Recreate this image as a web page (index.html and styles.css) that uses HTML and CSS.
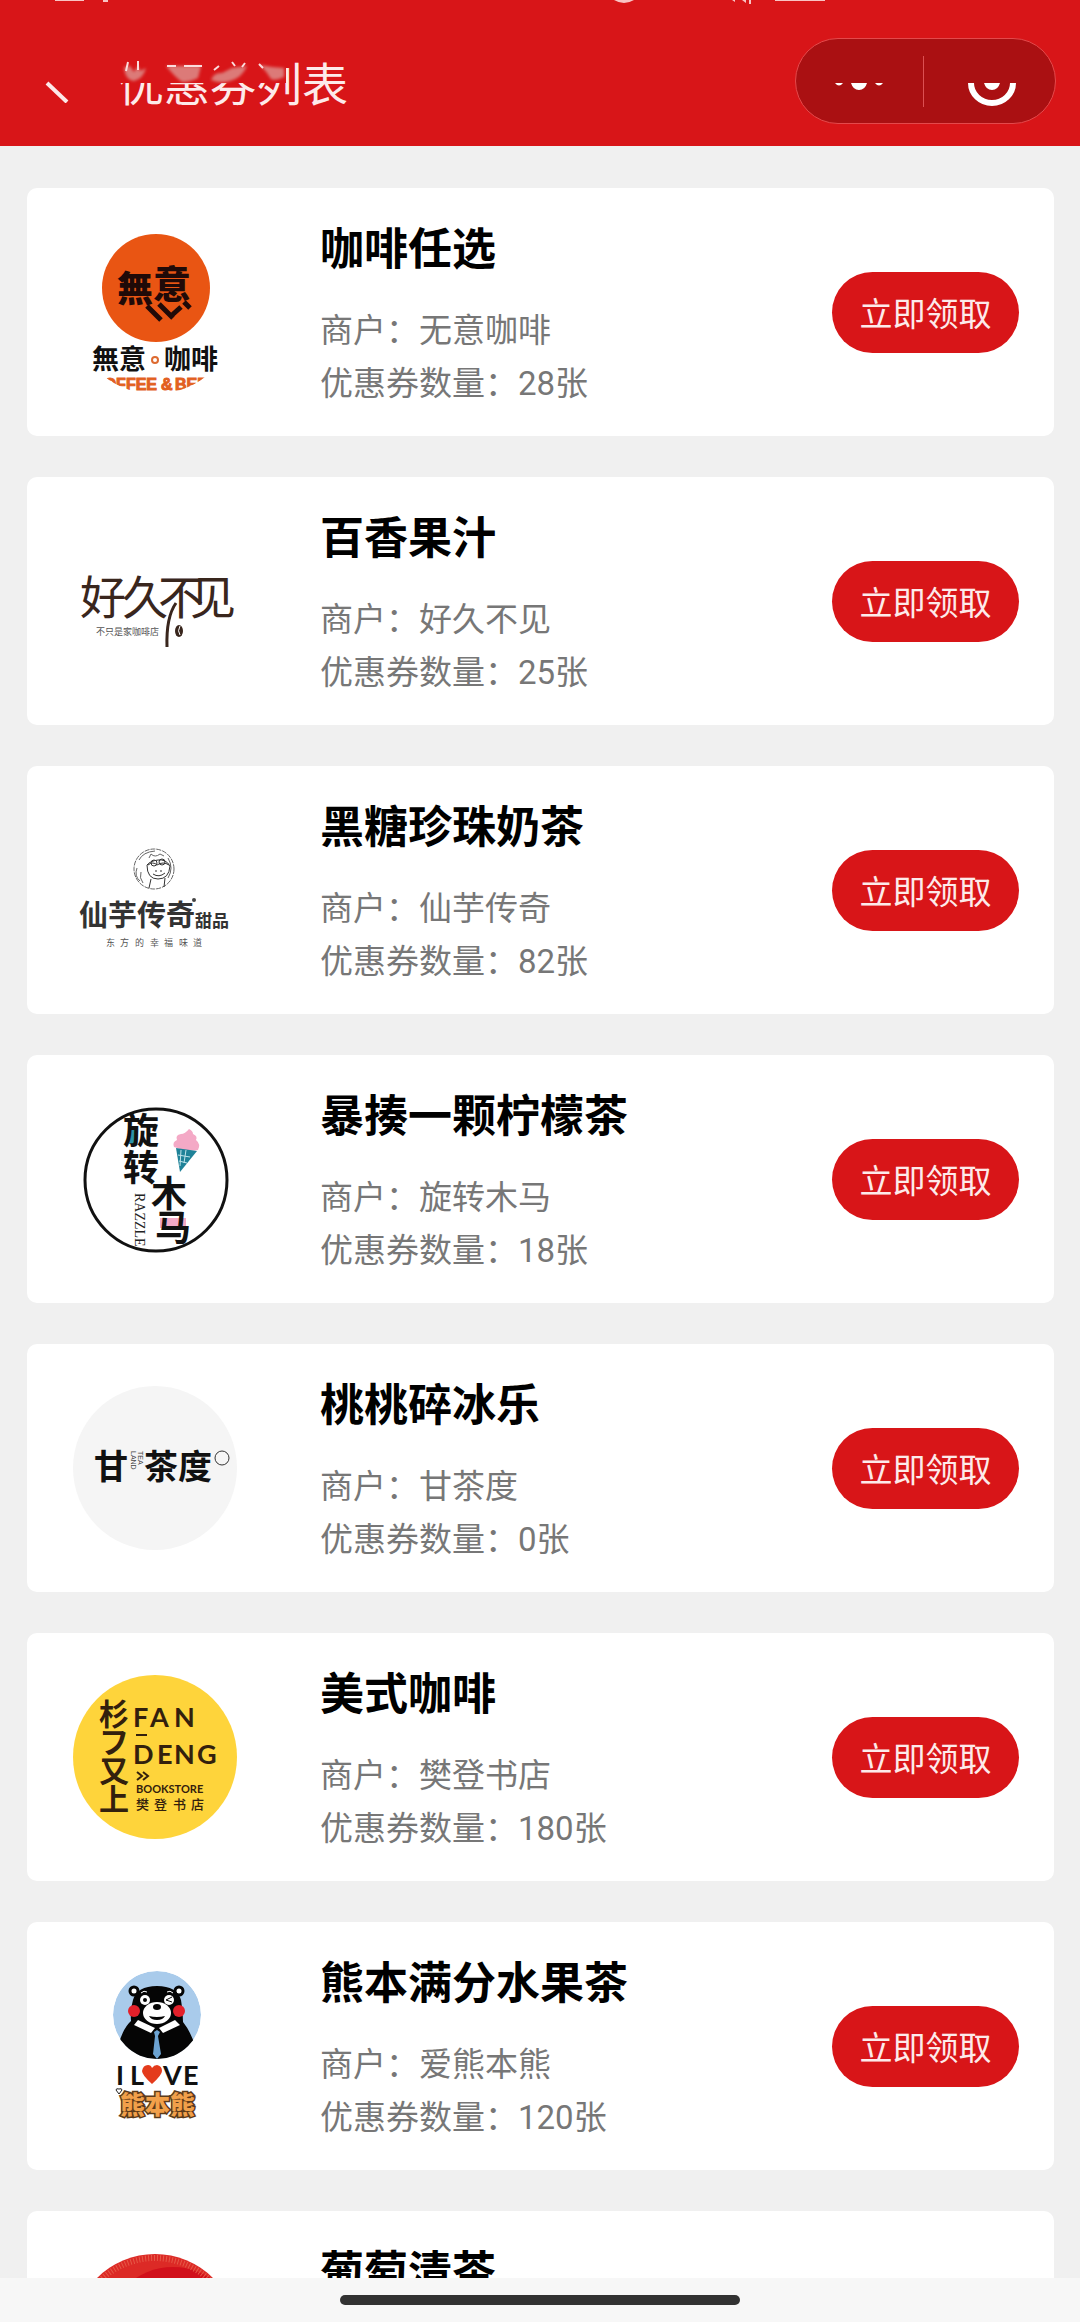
FILE: index.html
```
<!DOCTYPE html>
<html lang="zh-CN">
<head>
    <meta charset="UTF-8">
    <meta name="viewport" content="width=device-width, initial-scale=1.0">
    <title>优惠券列表</title>
    <link rel="stylesheet" href="styles.css">
</head>
<body>
    <header class="navbar">
        <svg class="status-left" width="60" height="4" viewBox="0 0 60 4" aria-hidden="true">
            <path d="M0 0h29v1H0zM48 0h5v2h-5z" fill="#f9c3c3"/>
        </svg>
        <svg class="status-right" width="214" height="4" viewBox="0 0 214 4" aria-hidden="true">
            <path d="M0 0h20q-10 6-20 0zM118 0h3v2zM128 0h4v3zM135 0h2v4h-2zM161 0h50v1h-50z" fill="#f9c3c3"/>
        </svg>
        <a class="back" href="#" aria-label="返回">
            <svg width="30" height="44" viewBox="0 0 30 44"><path d="M5 24L25 43" stroke="#fde8e8" stroke-width="4" fill="none"/></svg>
        </a>
        <div class="title-wrap">
            <h1>优惠券列表</h1>
            <svg class="title-mask" width="168" height="26" viewBox="0 0 168 26" aria-hidden="true">
                <defs>
                    <filter id="soft" x="-20%" y="-20%" width="140%" height="140%"><feGaussianBlur stdDeviation="1.5"/></filter>
                </defs>
                <rect width="168" height="25" fill="#d81518"/>
                <g fill="#dc7a78" filter="url(#soft)">
                    <path d="M6 9q1 13 10 14q9-2 12-13l-6 3l-2-5l-4 6l-4-6z"/>
                    <path d="M48 8h35l-3 12q-8 4-16 4q-7-5-16-16z"/>
                    <path d="M93 22q3-8 11-7l10-5l15-2q-5 12-17 15q-9 3-19-1z"/>
                    <path d="M142 7l12 2l12 1v9q-8 4-13 2q-4-7-11-14z"/>
                </g>
                <path d="M10 4l-2 9M20 3v9M49 8h9M66 8h18M96 12l5-4M114 4l3 4M127 5l-3 4M141 6l4 4" stroke="#fbdcdc" stroke-width="2" fill="none"/>
            </svg>
        </div>
        <div class="capsule">
            <button type="button" aria-label="更多">
                <svg width="50" height="50" viewBox="0 0 50 50"><path d="M1 27h8q-4 5-8 0zM17 27h16q-2 7-8 7t-8-7zM41 27h8q-4 5-8 0z" fill="#fff"/></svg>
            </button>
            <button type="button" aria-label="关闭">
                <svg width="50" height="50" viewBox="0 0 50 50"><path d="M4 27a21 20 0 0 0 42 0" fill="none" stroke="#fff" stroke-width="6"/><path d="M17 27h16q-2 7-8 7t-8-7z" fill="#fff"/></svg>
            </button>
        </div>
    </header>

    <main class="coupon-list">
        <article class="coupon">
            <svg class="logo" viewBox="0 0 165 165" role="img" aria-label="无意咖啡">
                <clipPath id="round"><circle cx="82" cy="82" r="82"/></clipPath>
                <circle cx="83" cy="58" r="54" fill="#e95513"/>
                <g fill="#200a08" font-weight="900">
                    <text x="44" y="72" font-size="36">無</text>
                    <text x="80" y="68" font-size="38">意</text>
                </g>
                <path d="M74 76l14 14M86 74l14 14M98 86l10-9M111 72l6 6" stroke="#200a08" stroke-width="5"/>
                <g fill="#111" font-size="27" font-weight="700">
                    <text x="19" y="139">無意</text>
                    <text x="91" y="139">咖啡</text>
                </g>
                <circle cx="82" cy="130" r="3" fill="none" stroke="#dd6a30" stroke-width="2"/>
                <g class="latin" fill="#e2601f" stroke="#e2601f" font-size="16" font-weight="700" clip-path="url(#round)">
                    <text x="84" y="160" text-anchor="end">COFFEE</text>
                    <text x="88" y="160">&amp;</text>
                    <text x="102" y="160">BEER</text>
                </g>
            </svg>
            <div class="info">
                <h2>咖啡任选</h2>
                <p>商户：无意咖啡</p>
                <p>优惠券数量：28张</p>
            </div>
            <button class="claim" type="button">立即领取</button>
        </article>

        <article class="coupon">
            <svg class="logo" viewBox="0 0 165 165" role="img" aria-label="好久不见">
                <g fill="#39261d" font-size="46" font-weight="400">
                    <text x="7" y="95">好</text>
                    <text x="49" y="95">久</text>
                    <text x="85" y="95">不</text>
                    <text x="117" y="95">见</text>
                </g>
                <path d="M94 128q-1-30 9-44" fill="none" stroke="#39261d" stroke-width="3"/>
                <ellipse cx="106" cy="112" rx="4" ry="6" fill="#39261d"/>
                <path d="M107 107q-3 5 0 9" fill="none" stroke="#fff"/>
                <text x="23" y="116" font-size="9" fill="#555">不只是家咖啡店</text>
            </svg>
            <div class="info">
                <h2>百香果汁</h2>
                <p>商户：好久不见</p>
                <p>优惠券数量：25张</p>
            </div>
            <button class="claim" type="button">立即领取</button>
        </article>

        <article class="coupon">
            <svg class="logo" viewBox="0 0 165 165" role="img" aria-label="仙芋传奇">
                <g fill="none" stroke="#666">
                    <circle cx="81" cy="61" r="20" stroke-dasharray="5 1"/>
                    <path d="M66 52q4-8 16-9M64 60q-3 8 3 13M70 75q-4-5-2-11M95 50q6 10 0 20M76 50l2-4q4 4 9 0l4 2"/>
                    <path d="M74 57q0 14 11 14t12-13q-4-7-12-6t-11 5zM78 71l-2 9M92 70l-1 9M75 57q5-4 9 0q6-4 12 0" stroke="#333"/>
                    <circle cx="81" cy="55" r="3" stroke="#333"/><circle cx="89" cy="54" r="3" stroke="#333"/>
                    <path d="M83 62v2M88 62v2M80 66q6 4 12-1" stroke="#333"/>
                </g>
                <g fill="#333" font-weight="700">
                    <text x="6" y="118" font-size="29">仙芋传奇</text>
                    <text x="122" y="119" font-size="17">甜品</text>
                </g>
                <circle cx="121" cy="92" r="2" fill="#444"/>
                <text x="33 47 62 77 91 106 120" y="138" font-size="9" fill="#555">东方的幸福味道</text>
            </svg>
            <div class="info">
                <h2>黑糖珍珠奶茶</h2>
                <p>商户：仙芋传奇</p>
                <p>优惠券数量：82张</p>
            </div>
            <button class="claim" type="button">立即领取</button>
        </article>

        <article class="coupon">
            <svg class="logo" viewBox="0 0 165 165" role="img" aria-label="旋转木马">
                <circle cx="83" cy="83" r="71" fill="#fff" stroke="#111" stroke-width="3"/>
                <path d="M56 29h7v18h-7z" fill="#2c93a8"/>
                <path d="M87 121h26v10H87z" fill="#f4a9c6"/>
                <path d="M101 50q-2-5 3-7q-2-5 4-6q4 0 8-5q4 2 4 5q5 2 3 6q5 4 2 10q-12 2-24-3z" fill="#f4a9c6"/>
                <path d="M103 51l21 3l-17 21z" fill="#1f8298"/>
                <path d="M108 53l-1 16M113 53l-2 13M105 58l12 2M106 64l8 2" stroke="#bfe3ea" fill="none"/>
                <g fill="#111" font-weight="700">
                    <text x="50" y="47" font-size="36">旋</text>
                    <text x="50" y="84" font-size="36">转</text>
                    <text x="78" y="110" font-size="36">木</text>
                    <text x="82" y="144" font-size="36">马</text>
                </g>
                <text class="serif" transform="translate(62 96) rotate(90)" font-size="14" fill="#222">RAZZLE</text>
            </svg>
            <div class="info">
                <h2>暴揍一颗柠檬茶</h2>
                <p>商户：旋转木马</p>
                <p>优惠券数量：18张</p>
            </div>
            <button class="claim" type="button">立即领取</button>
        </article>

        <article class="coupon">
            <svg class="logo" viewBox="0 0 165 165" role="img" aria-label="甘茶度">
                <circle cx="82" cy="82" r="82" fill="#f5f5f5"/>
                <g fill="#111" font-size="34" font-weight="700">
                    <text x="21" y="93">甘</text>
                    <text x="71" y="93">茶</text>
                    <text x="105" y="93">度</text>
                </g>
                <g class="latin" fill="#444" font-size="7">
                    <text transform="translate(65 65) rotate(90)">TEA</text>
                    <text transform="translate(58 65) rotate(90)">LAND</text>
                </g>
                <circle cx="149" cy="72" r="7" fill="none" stroke="#333"/>
            </svg>
            <div class="info">
                <h2>桃桃碎冰乐</h2>
                <p>商户：甘茶度</p>
                <p>优惠券数量：0张</p>
            </div>
            <button class="claim" type="button">立即领取</button>
        </article>

        <article class="coupon">
            <svg class="logo" viewBox="0 0 165 165" role="img" aria-label="樊登书店">
                <circle cx="82" cy="82" r="82" fill="#fed43b"/>
                <g fill="#33200d" font-size="30" font-weight="700">
                    <text x="26" y="50">杉</text>
                    <text x="26" y="78">フ</text>
                    <text x="26" y="107">又</text>
                    <text x="26" y="135">上</text>
                </g>
                <g class="lato" fill="#33200d" font-size="27" font-weight="700">
                    <text x="60 77 101" y="52">FAN</text>
                    <text x="60 84 101 124" y="89">DENG</text>
                    <text x="63" y="118" font-size="11">BOOKSTORE</text>
                </g>
                <path d="M63 60h11M64 97l5 4l-5 4M70 97l5 4l-5 4" fill="none" stroke="#33200d" stroke-width="2"/>
                <text x="63 81 100 118" y="134" font-size="13" font-weight="500" fill="#33200d">樊登书店</text>
            </svg>
            <div class="info">
                <h2>美式咖啡</h2>
                <p>商户：樊登书店</p>
                <p>优惠券数量：180张</p>
            </div>
            <button class="claim" type="button">立即领取</button>
        </article>

        <article class="coupon">
            <svg class="logo" viewBox="0 0 165 165" role="img" aria-label="爱熊本熊">
                <clipPath id="sky"><circle cx="84" cy="51" r="44"/></clipPath>
                <g clip-path="url(#sky)">
                    <circle cx="84" cy="51" r="44" fill="#a9cbeb"/>
                    <circle cx="61" cy="27" r="4" fill="#fff" stroke="#050505" stroke-width="3"/>
                    <circle cx="106" cy="27" r="4" fill="#fff" stroke="#050505" stroke-width="3"/>
                    <path d="M60 36q4-14 24-14t24 14q2 10 2 22q8 10 12 24v15H45V82q5-18 13-25q-1-12 2-21z" fill="#050505"/>
                    <circle cx="61" cy="47" r="6" fill="#e3202a"/>
                    <circle cx="106" cy="47" r="6" fill="#e3202a"/>
                    <circle cx="72" cy="36" r="5" fill="#fff"/><circle cx="72" cy="36" r="2" fill="#050505"/>
                    <circle cx="96" cy="36" r="5" fill="#fff"/>
                    <path d="M99 33l-6 3l6 2" fill="none" stroke="#050505"/>
                    <path d="M68 29q3-3 6-1M94 28q3-2 6 1" fill="none" stroke="#fff"/>
                    <ellipse cx="84" cy="49" rx="14" ry="11" fill="#fff"/>
                    <ellipse cx="84" cy="43" rx="4" ry="3" fill="#050505"/>
                    <path d="M76 52q8 2 16 0q-2 4-8 4t-8-4z" fill="#050505"/>
                    <path d="M65 56l17 8l-4 5l-17-8zM102 56l5 5l-17 8l-4-5z" fill="#fff"/>
                    <path d="M81 68l3-2l3 2l-2 4l3 18l-4 5l-4-5l2-18z" fill="#6ca3d2"/>
                </g>
                <g class="lato" fill="#111" font-size="27" font-weight="700">
                    <text x="43" y="121">I</text>
                    <text x="57" y="121">L</text>
                    <text x="90" y="121">V</text>
                    <text x="110" y="121">E</text>
                </g>
                <path d="M79 120q-10-9-10-13q1-6 6-6q3 0 4 3q2-3 5-3q5 1 5 6q0 4-10 13z" fill="#e43b1c"/>
                <path d="M46 130l-3-4q0-2 3-1q3-1 3 1z" fill="none" stroke="#222"/>
                <text x="47" y="150" font-size="25" font-weight="900" fill="#f1a04a" stroke="#5b3b1a" stroke-width="3" paint-order="stroke">熊本熊</text>
            </svg>
            <div class="info">
                <h2>熊本满分水果茶</h2>
                <p>商户：爱熊本熊</p>
                <p>优惠券数量：120张</p>
            </div>
            <button class="claim" type="button">立即领取</button>
        </article>

        <article class="coupon">
            <svg class="logo" viewBox="0 0 165 165" aria-hidden="true">
                <circle cx="82" cy="83" r="82" fill="#dc2a26"/>
                <circle cx="100" cy="82" r="68" fill="#d1101b"/>
                <circle cx="82" cy="83" r="78" fill="none" stroke="#e65a48" stroke-width="6" stroke-dasharray="1 2"/>
            </svg>
            <div class="info">
                <h2>葡萄清茶</h2>
            </div>
        </article>
    </main>

    <footer class="gesture-bar"><span></span></footer>
</body>
</html>
```
FILE: styles.css
```
* {
    box-sizing: border-box;
}
body {
    margin: 0;
    height: 100vh;
    display: flex;
    flex-direction: column;
    background-color: #f0f0f0;
    font-family: Roboto, "Noto Sans CJK SC", sans-serif;
    overflow: hidden;
}
h1, h2, p {
    margin: 0;
}
button {
    border: none;
    padding: 0;
    font-family: inherit;
    cursor: pointer;
}

/* top bar */
.navbar {
    position: relative;
    flex: none;
    display: flex;
    align-items: center;
    height: 146px;
    padding: 16px 24px 0 42px;
    background-color: #d81518;
}
.status-left {
    position: absolute;
    top: 0;
    left: 55px;
}
.status-right {
    position: absolute;
    top: 0;
    right: 252px;
}
.back {
    display: flex;
    width: 76px;
}
.title-wrap {
    position: relative;
    padding-top: 8px;
}
.title-wrap h1 {
    color: #fdeaea;
    font-size: 46px;
    font-weight: 400;
    line-height: 60px;
}
.title-mask {
    position: absolute;
    top: 11px;
    left: 0;
}
.capsule {
    display: flex;
    width: 261px;
    height: 86px;
    margin-left: auto;
    border: 1px solid #e4494b;
    border-radius: 43px;
    background-color: #aa1012;
}
.capsule button {
    flex: 1;
    display: flex;
    align-items: center;
    justify-content: center;
    background: none;
}
.capsule button + button {
    position: relative;
    padding-left: 6px;
}
.capsule button + button::before {
    content: "";
    position: absolute;
    left: 0;
    top: 17px;
    width: 1px;
    height: 51px;
    background-color: #dc5052;
}

/* coupons */
.coupon-list {
    flex: 1;
    min-height: 0;
    overflow-y: auto;
    scrollbar-width: none;
    padding: 42px 26px 42px 27px;
}
.coupon {
    display: flex;
    align-items: center;
    height: 248px;
    margin-bottom: 41px;
    padding: 0 35px 0 46px;
    border-radius: 10px;
    background-color: #fff;
}
.logo {
    flex: none;
    width: 165px;
    height: 165px;
    font-family: "Noto Sans CJK SC", sans-serif;
}
.latin {
    font-family: "Liberation Sans", sans-serif;
}
.serif {
    font-family: "Liberation Serif", serif;
}
.lato {
    font-family: Lato, sans-serif;
}
.info {
    flex: 1;
    align-self: flex-start;
    margin-left: 82px;
    padding-top: 30px;
}
.info h2 {
    margin-bottom: 22px;
    color: #000;
    font-size: 44px;
    font-weight: 700;
    line-height: 64px;
}
.info p {
    color: #777;
    font-size: 33px;
    line-height: 53px;
}
.claim {
    flex: none;
    width: 187px;
    height: 81px;
    border-radius: 41px;
    background-color: #d81518;
    color: #fdeaea;
    font-size: 33px;
}

/* system gesture area */
.gesture-bar {
    flex: none;
    display: flex;
    justify-content: center;
    align-items: flex-start;
    height: 44px;
    padding-top: 17px;
    background-color: #f7f7f7;
}
.gesture-bar span {
    width: 37%;
    height: 10px;
    border-radius: 5px;
    background-color: #323232;
}
```
